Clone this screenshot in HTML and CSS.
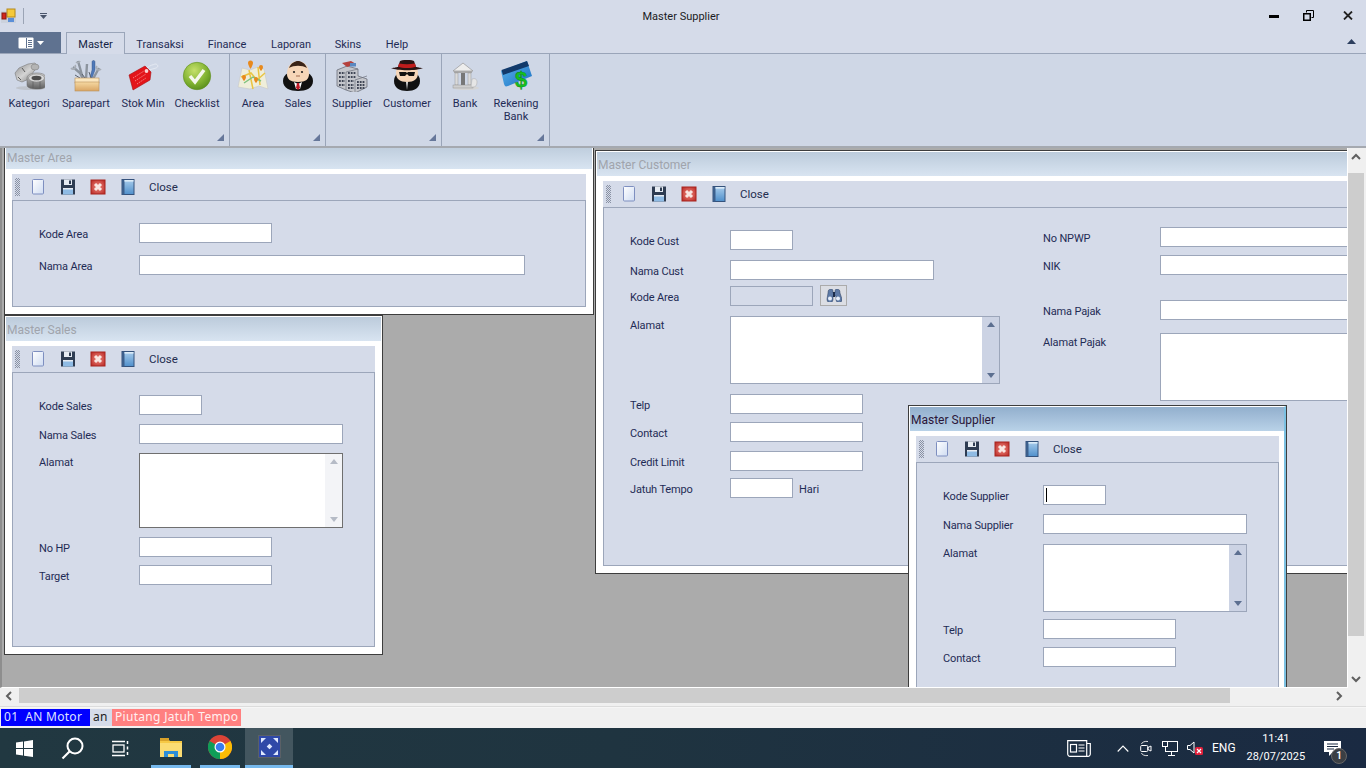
FILE: index.html
```html
<!DOCTYPE html>
<html lang="id">
<head>
<meta charset="utf-8">
<title>Master Supplier</title>
<link rel="stylesheet" href="styles.css">
</head>
<body>
<svg class="defs" width="0" height="0">
  <defs>
    <linearGradient id="gPage" x1="0" y1="0" x2="1" y2="1"><stop offset="0" stop-color="#fff"/><stop offset="1" stop-color="#cfdcf2"/></linearGradient>
    <linearGradient id="gBook" x1="0" y1="0" x2="0" y2="1"><stop offset="0" stop-color="#a9cdec"/><stop offset="1" stop-color="#4f8fcb"/></linearGradient>
    <radialGradient id="gRed" cx=".5" cy=".5" r=".7"><stop offset="0" stop-color="#ee8a80"/><stop offset="1" stop-color="#b82420"/></radialGradient>
    <radialGradient id="gGreen" cx=".4" cy=".3" r=".8"><stop offset="0" stop-color="#c5e06a"/><stop offset=".6" stop-color="#7fb130"/><stop offset="1" stop-color="#4f8518"/></radialGradient>
    <linearGradient id="gSteel" x1="0" y1="0" x2="0" y2="1"><stop offset="0" stop-color="#d6d6d6"/><stop offset=".5" stop-color="#989898"/><stop offset="1" stop-color="#5e5e5e"/></linearGradient>
    <linearGradient id="gBolt" x1="0" y1="0" x2="1" y2="1"><stop offset="0" stop-color="#8d8d8d"/><stop offset=".5" stop-color="#d4d4d4"/><stop offset="1" stop-color="#6a6a6a"/></linearGradient>
    <linearGradient id="gBox" x1="0" y1="0" x2="0" y2="1"><stop offset="0" stop-color="#f6d9a2"/><stop offset="1" stop-color="#d9a564"/></linearGradient>
    <linearGradient id="gCard" x1="0" y1="0" x2="1" y2="1"><stop offset="0" stop-color="#5cb6ee"/><stop offset="1" stop-color="#1c6fc2"/></linearGradient>
    <symbol id="i-new" viewBox="0 0 16 16"><rect x="2.500" y=".5" width="11" height="14.500" rx="1" fill="url(#gPage)" stroke="#7e8fc0"/></symbol>
    <symbol id="i-save" viewBox="0 0 16 16"><path d="M1 .5h14v15H1z" fill="#2e3c52"/><rect x="4" y=".5" width="8" height="5.500" fill="#e6ebf2"/><rect x="9" y="1.500" width="2" height="3.500" fill="#2e3c52"/><rect x="3" y="9" width="10" height="6.500" fill="#8fbbe4"/><rect x="3" y="9" width="10" height="1.500" fill="#e6ebf2"/></symbol>
    <symbol id="i-del" viewBox="0 0 16 16"><rect x="1" y="1" width="14" height="14" fill="url(#gRed)" stroke="#a8241f"/><path d="M5 5l6 6M11 5l-6 6" stroke="#f9e6e2" stroke-width="3"/></symbol>
    <symbol id="i-book" viewBox="0 0 16 16"><rect x="2" y=".5" width="12" height="15" fill="url(#gBook)" stroke="#34527c"/><rect x="2" y="1" width="2.500" height="14.500" fill="#3c5f8c"/><rect x="4.500" y="1" width="9" height="1.600" fill="#dcecf8"/></symbol>
  </defs>
</svg>

<header class="titlebar">
  <div class="qat">
    <svg class="qat-logo" width="15" height="15" viewBox="0 0 15 15"><rect x="0" y="3" width="15" height="12" fill="#ccd2dd"/><rect x="6" y="1" width="8" height="8" fill="#f5c93a" stroke="#b58a1c"/><rect x="1" y="5" width="4" height="6" fill="#d3261c" stroke="#8a1a14"/><rect x="7" y="10" width="6" height="4" fill="#5b8fd8"/></svg>
    <span class="qat-sep"></span>
    <svg class="qat-arrow" width="9" height="6" viewBox="0 0 9 6"><rect x="1" y="0" width="7" height="1" fill="#4a556c"/><path d="M1 2h7L4.500 6z" fill="#4a556c"/></svg>
  </div>
  <div class="app-title">Master Supplier</div>
  <div class="winctl">
    <svg class="wc wc-min" width="10" height="3" viewBox="0 0 10 3"><rect width="10" height="3" fill="#000"/></svg>
    <svg class="wc wc-max" width="11" height="11" viewBox="0 0 11 11"><path d="M3.500 2.500v-2h7v7h-2" fill="none" stroke="#000"/><rect x=".75" y="3.750" width="6.500" height="6.500" fill="none" stroke="#000" stroke-width="1.500"/></svg>
    <svg class="wc wc-x" width="10" height="9" viewBox="0 0 10 9"><path d="M1 .5l8 8M9 .5l-8 8" stroke="#222" stroke-width="1.800"/></svg>
  </div>
</header>

<nav class="tabs">
  <div class="filebtn">
    <svg width="16" height="12" viewBox="0 0 16 12"><rect x=".5" y=".5" width="15" height="11" rx="1" fill="#fff"/><rect x="8" y="1" width="1" height="10" fill="#5f7290"/><path d="M10 3.500h4M10 5.500h4M10 7.500h4M10 9.500h4" stroke="#5f7290"/></svg>
    <svg width="7" height="4" viewBox="0 0 7 4"><path d="M0 0h7L3.500 4z" fill="#fff"/></svg>
  </div>
  <div class="tab tab-on">Master</div>
  <div class="tab t-trans">Transaksi</div>
  <div class="tab t-fin">Finance</div>
  <div class="tab t-lap">Laporan</div>
  <div class="tab t-skin">Skins</div>
  <div class="tab t-help">Help</div>
  <svg class="collapse" width="9" height="5" viewBox="0 0 9 5"><path d="M0 5h9L4.500 0z" fill="#2c3e5e"/></svg>
</nav>

<section class="ribbon">
  <div class="group g1">
    <div class="rb"><svg viewBox="0 0 32 32"><ellipse cx="18" cy="28" rx="15" ry="2" fill="#bfc4cc"/><path d="M2 13l4-5 9-4 7-1 3 4-4 4-5 8-7 3-5-2z" fill="url(#gBolt)" stroke="#6a6a6a" stroke-width=".5"/><path d="M5 17l3 3M9 8l3 4" stroke="#5a5a5a"/><ellipse cx="22" cy="7" rx="4" ry="3" fill="#b4b4b4" stroke="#777" stroke-width=".5"/><path d="M14 18c0-3 4-5 10-5s9 2 9 5v7c0 3-4 4-9 4s-10-1-10-4z" fill="url(#gSteel)" stroke="#666" stroke-width=".5"/><ellipse cx="23.500" cy="18" rx="8" ry="4" fill="#d8d8d8" stroke="#777" stroke-width=".5"/><ellipse cx="23.500" cy="18" rx="5" ry="2.300" fill="#4e4e4e"/><path d="M20 21.500v7M27 21.500v7" stroke="#5a5a5a" stroke-width=".7"/></svg><span>Kategori</span></div>
    <div class="rb"><svg viewBox="0 0 32 32"><path d="M3 7l7 6 3 6M8 1l2 7 3 11M17 4l-1 15M29 8l-6 11" stroke="#8c949e" stroke-width="2.400" fill="none"/><path d="M1 8a2.500 2.500 0 0 0 4-3M6 2a2.500 2.500 0 0 0 4-1M27 6a2.500 2.500 0 0 0 4 3" fill="none" stroke="#a8aeb6" stroke-width="1.600"/><path d="M22 2c0-2 3-2 3 0l0 8-3 8-2-1 2-7z" fill="#4f79b8" stroke="#2f4f80" stroke-width=".4"/><path d="M5 15l5 3M12 14l3 4M19 12l2 6" stroke="#5a616c"/><rect x="5" y="18" width="24" height="5" fill="#fbe7bf" stroke="#b9905a" stroke-width=".6"/><rect x="5" y="22" width="24" height="9" fill="url(#gBox)" stroke="#b9905a" stroke-width=".6"/></svg><span>Sparepart</span></div>
    <div class="rb"><svg viewBox="0 0 32 32"><path d="M20 8c3-3 6-3 8-4 3 0 4 3 1 4-2 1-5 1-7 2" fill="none" stroke="#e8ecf4" stroke-width=".8"/><path d="M2 15L18 6l6 6-1 8L6 30z" fill="#e3151a" stroke="#a60d10" stroke-width=".6"/><path d="M6 18l11-7M8 21l11-7M10 24l9-6" stroke="#f78b8b" stroke-width=".9" stroke-dasharray="1.500 1"/><circle cx="19.500" cy="11" r="1.900" fill="#f9d5d5"/></svg><span>Stok Min</span></div>
    <div class="rb"><svg viewBox="0 0 32 32"><circle cx="16" cy="16" r="13.700" fill="url(#gGreen)" stroke="#5f8f1f" stroke-width=".6"/><path d="M9 16l5 6 9-12" fill="none" stroke="#f4f7ec" stroke-width="3.500"/></svg><span>Checklist</span></div>
    <i class="launch"></i>
  </div>
  <div class="group g2">
    <div class="rb"><svg viewBox="0 0 32 32"><path d="M5 8l8 2 8-3 6 2 4 20-9-3-9 3-12-2z" fill="#efeeda" stroke="#c8c8c8" stroke-width=".6"/><path d="M4 17l10-4 6 7 8-7M12 10l4 19M21 7l2 18" stroke="#e9c442" stroke-width="1.500" fill="none"/><path d="M7 23l9-6 8 4" stroke="#7ec27e" stroke-width="1.500" fill="none"/><g fill="#e8891c"><path d="M11 3a2.500 2.500 0 0 1 5 0c0 2-2.500 6-2.500 6S11 5 11 3z"/><path d="M22 7a2 2 0 0 1 4 0c0 2-2 4-2 4s-2-2-2-4z"/><path d="M5 17a2 2 0 0 1 4 0c0 2-2 4-2 4s-2-2-2-4z"/><path d="M17 19a2 2 0 0 1 4 0c0 2-2 4-2 4s-2-2-2-4z"/></g></svg><span>Area</span></div>
    <div class="rb"><svg viewBox="0 0 32 32"><path d="M1 21C1 28 8 31 16 31s15-3 15-10c0-4-2-6-5-8H6c-3 2-5 4-5 8z" fill="#111"/><path d="M5 14C5 6 10 1 16 1s11 5 11 13c0 5-3 8-11 8S5 19 5 14z" fill="#f6d6b8"/><path d="M7 8c2-5 6-7 9-7s7 2 9 7c-5-3-13-3-18 0z" fill="#3a2418"/><circle cx="12" cy="12" r="1.100" fill="#222"/><circle cx="20" cy="12" r="1.100" fill="#222"/><path d="M14 16h4" stroke="#a06a50"/><path d="M12 22l4 2 4-2-2 7h-4z" fill="#fff"/><path d="M15 23h2l1 5-2 2-2-2z" fill="#c01c28"/></svg><span>Sales</span></div>
    <i class="launch"></i>
  </div>
  <div class="group g3">
    <div class="rb"><svg viewBox="0 0 32 32"><path d="M1 10l10-4 11 3v7l9 3v8l-12 6-9-3-9-4z" fill="#c4c6cc" stroke="#5f636e" stroke-width=".7"/><path d="M6 3l9-2 5 3-9 3z" fill="#b5413c"/><rect x="14" y="3" width="6" height="3.500" fill="#5a88c0"/><path d="M10 30V12l12-3M19 32V20l12-4" fill="none" stroke="#6d717c" stroke-width=".7"/><path d="M3 13h6M3 17h6M3 21h6M3 25h6M12 13h8M12 17h8M12 21h6M21 22h8M21 25h8M21 28h8M12 25h6M12 28h6" stroke="#3f4555" stroke-width="1.800" stroke-dasharray="1.800 1"/></svg><span>Supplier</span></div>
    <div class="rb"><svg viewBox="0 0 32 32"><path d="M3 21c0 7 6 10 13 10s13-3 13-10c0-4-2-6-4-8H7c-2 2-4 4-4 8z" fill="#111"/><path d="M5 13c0-6 4-9 11-9s11 3 11 9c0 6-4 9-11 9S5 19 5 13z" fill="#f6d6b8"/><path d="M0 8c4 0 5-1 7-1l2-6c4-1.500 10-1.500 14 0l2 6c2 0 3 1 7 1-6 3-26 3-32 0z" fill="#2a1414"/><path d="M8 3.500c5 1 11 1 16 0l1 3c-5 2-13 2-18 0z" fill="#c01c1c"/><path d="M8 12h7l1 1 1-1h7l-1 4h-5l-2-2-2 2h-5z" fill="#111"/><path d="M15 22l1 8 1-8z" fill="#ddd"/></svg><span>Customer</span></div>
    <i class="launch"></i>
  </div>
  <div class="group g4">
    <div class="rb"><svg viewBox="0 0 32 32"><ellipse cx="17" cy="28" rx="13" ry="2" fill="#d5d5d5"/><path d="M4 11L14 3l10 8z" fill="#ededed" stroke="#8a8a8a" stroke-width=".6"/><rect x="5" y="11" width="18" height="2" fill="#a9a9a9"/><rect x="6" y="13" width="3" height="12" fill="#dadada" stroke="#888" stroke-width=".4"/><rect x="12" y="13" width="4" height="12" fill="#777"/><rect x="19" y="13" width="3" height="12" fill="#dadada" stroke="#888" stroke-width=".4"/><rect x="4" y="25" width="20" height="3" fill="#cfcfcf" stroke="#888" stroke-width=".4"/><path d="M23 19c3-1 5 0 5 3s-1 5-4 5l-2 0z" fill="#e6e6e6" stroke="#aaa" stroke-width=".5"/></svg><span>Bank</span></div>
    <div class="rb"><svg viewBox="0 0 32 32"><path d="M1 11L27 1l5 15-24 10c-3 1-3 0-4-2z" fill="url(#gCard)"/><path d="M1.500 10L27 1l2 5L3 15z" fill="#123a6b"/><text class="dollar" x="21" y="27">$</text></svg><span>Rekening Bank</span></div>
    <i class="launch"></i>
  </div>
</section>

<main class="workspace">
  <div class="mdi">

    <article class="win w-area">
      <div class="win-in">
        <div class="win-title">Master Area</div>
        <div class="win-body">
          <div class="tbar">
            <i class="grip"></i>
            <span class="tb"><svg width="16" height="16"><use href="#i-new"/></svg></span>
            <span class="tb"><svg width="16" height="16"><use href="#i-save"/></svg></span>
            <span class="tb"><svg width="16" height="16"><use href="#i-del"/></svg></span>
            <span class="tb"><svg width="16" height="16"><use href="#i-book"/></svg></span>
            <span class="tb-close">Close</span>
          </div>
          <div class="panel">
            <div class="row"><label>Kode Area</label><div class="fld w133"></div></div>
            <div class="row mt12"><label>Nama Area</label><div class="fld w386"></div></div>
          </div>
        </div>
      </div>
    </article>

    <article class="win w-sales">
      <div class="win-in">
        <div class="win-title">Master Sales</div>
        <div class="win-body">
          <div class="tbar">
            <i class="grip"></i>
            <span class="tb"><svg width="16" height="16"><use href="#i-new"/></svg></span>
            <span class="tb"><svg width="16" height="16"><use href="#i-save"/></svg></span>
            <span class="tb"><svg width="16" height="16"><use href="#i-del"/></svg></span>
            <span class="tb"><svg width="16" height="16"><use href="#i-book"/></svg></span>
            <span class="tb-close">Close</span>
          </div>
          <div class="panel">
            <div class="row"><label>Kode Sales</label><div class="fld w63"></div></div>
            <div class="row mt9"><label>Nama Sales</label><div class="fld w204"></div></div>
            <div class="row rowta mt9"><label>Alamat</label>
              <div class="ta w204 h75 ta-dim"><div class="ta-sb"><i class="up"></i><i class="dn"></i></div></div></div>
            <div class="row mt9"><label>No HP</label><div class="fld w133"></div></div>
            <div class="row mt8"><label>Target</label><div class="fld w133"></div></div>
          </div>
        </div>
      </div>
    </article>

    <article class="win w-cust">
      <div class="win-in">
        <div class="win-title">Master Customer</div>
        <div class="win-body">
          <div class="tbar">
            <i class="grip"></i>
            <span class="tb"><svg width="16" height="16"><use href="#i-new"/></svg></span>
            <span class="tb"><svg width="16" height="16"><use href="#i-save"/></svg></span>
            <span class="tb"><svg width="16" height="16"><use href="#i-del"/></svg></span>
            <span class="tb"><svg width="16" height="16"><use href="#i-book"/></svg></span>
            <span class="tb-close">Close</span>
          </div>
          <div class="panel panel-cols">
            <div class="col-l">
              <div class="row"><label>Kode Cust</label><div class="fld w63"></div></div>
              <div class="row mt10"><label>Nama Cust</label><div class="fld w204"></div></div>
              <div class="row mt6"><label>Kode Area</label><div class="fld w83 fld-off"></div>
                <div class="findbtn"><svg width="16" height="13" viewBox="0 0 16 13"><path d="M2 4c0-3 1-4 3-4s2 1 2 4h2c0-3 0-4 2-4s3 1 3 4l2 6a3 3 0 0 1-6 1V7H7v4a3 3 0 0 1-6-1z" fill="#5e7aa6" stroke="#2c3e5e" stroke-width=".5"/><circle cx="4" cy="9.500" r="2" fill="#e8f0fc"/><circle cx="12" cy="9.500" r="2" fill="#e8f0fc"/><rect x="7" y="3" width="2" height="5" fill="#1c2c4a"/></svg></div></div>
              <div class="row rowta mt10"><label>Alamat</label>
                <div class="ta w270 h68"><div class="ta-sb"><i class="up"></i><i class="dn"></i></div></div></div>
              <div class="row mt10"><label>Telp</label><div class="fld w133"></div></div>
              <div class="row mt8"><label>Contact</label><div class="fld w133"></div></div>
              <div class="row mt9"><label>Credit Limit</label><div class="fld w133"></div></div>
              <div class="row mt7"><label>Jatuh Tempo</label><div class="fld w63"></div><span class="unit">Hari</span></div>
            </div>
            <div class="col-r">
              <div class="row rr"><label>No NPWP</label><div class="fld w300"></div></div>
              <div class="row rr mt8"><label>NIK</label><div class="fld w300"></div></div>
              <div class="row rr mt25"><label>Nama Pajak</label><div class="fld w300"></div></div>
              <div class="row rowta rr mt13"><label>Alamat Pajak</label><div class="ta w300 h68"></div></div>
            </div>
          </div>
        </div>
      </div>
    </article>

    <article class="win w-supp">
      <div class="win-in">
        <div class="win-title">Master Supplier</div>
        <div class="win-body">
          <div class="tbar">
            <i class="grip"></i>
            <span class="tb"><svg width="16" height="16"><use href="#i-new"/></svg></span>
            <span class="tb"><svg width="16" height="16"><use href="#i-save"/></svg></span>
            <span class="tb"><svg width="16" height="16"><use href="#i-del"/></svg></span>
            <span class="tb"><svg width="16" height="16"><use href="#i-book"/></svg></span>
            <span class="tb-close">Close</span>
          </div>
          <div class="panel">
            <div class="row"><label>Kode Supplier</label><div class="fld w63"><i class="caret"></i></div></div>
            <div class="row mt9"><label>Nama Supplier</label><div class="fld w204"></div></div>
            <div class="row rowta mt10"><label>Alamat</label>
              <div class="ta w204 h68"><div class="ta-sb"><i class="up"></i><i class="dn"></i></div></div></div>
            <div class="row mt7"><label>Telp</label><div class="fld w133"></div></div>
            <div class="row mt8"><label>Contact</label><div class="fld w133"></div></div>
          </div>
        </div>
      </div>
    </article>

  </div>
  <div class="vsb">
    <svg class="sb-ic" width="10" height="7" viewBox="0 0 10 7"><path d="M1 6l4-4 4 4" fill="none" stroke="#606060" stroke-width="2"/></svg>
    <div class="vsb-track"><div class="vsb-thumb"></div></div>
    <svg class="sb-ic" width="10" height="7" viewBox="0 0 10 7"><path d="M1 1l4 4 4-4" fill="none" stroke="#606060" stroke-width="2"/></svg>
  </div>
  <div class="hsb">
    <svg class="sb-ic" width="7" height="10" viewBox="0 0 7 10"><path d="M6 1L2 5l4 4" fill="none" stroke="#606060" stroke-width="2"/></svg>
    <div class="hsb-track"><div class="hsb-thumb"></div></div>
    <svg class="sb-ic" width="7" height="10" viewBox="0 0 7 10"><path d="M1 1l4 4-4 4" fill="none" stroke="#606060" stroke-width="2"/></svg>
  </div>
</main>

<div class="status">
  <span class="st st-blue">01  AN Motor</span>
  <span class="st st-plain">an</span>
  <span class="st st-pink">Piutang Jatuh Tempo</span>
</div>

<footer class="taskbar">
  <div class="tk tk-start"><svg width="17" height="17" viewBox="0 0 17 17"><path d="M0 2.500L7 1.500V8H0zM8 1.400L17 0v8H8zM0 9h7v6.500l-7-1zM8 9h9v8l-9-1.300z" fill="#fff"/></svg></div>
  <div class="tk tk-search"><svg width="23" height="23" viewBox="0 0 23 23"><circle cx="14" cy="9" r="7.500" fill="none" stroke="#fff" stroke-width="2"/><path d="M8.500 14.500L1.500 21.500" stroke="#fff" stroke-width="2.200"/></svg></div>
  <div class="tk tk-view"><svg width="17" height="17" viewBox="0 0 17 17"><rect x="1" y="5" width="11" height="7" fill="none" stroke="#fff" stroke-width="1.300"/><path d="M0 1.500h13M0 15.500h13" stroke="#fff" stroke-width="1.300"/><path d="M15.500 1v3M15.500 6.500v3M15.500 12v3" stroke="#fff" stroke-width="1.500"/></svg></div>
  <div class="tk tk-app tk-run"><svg width="22" height="20" viewBox="0 0 22 20"><path d="M0 2h8l2 2h12v16H0z" fill="#f6c945"/><rect x="0" y="1" width="9" height="3" fill="#d9a22a"/><path d="M0 6h22v14H0z" fill="#fbdc73"/><path d="M4 20v-6h14v6h-4v-3H8v3z" fill="#2f8fd8"/></svg></div>
  <div class="tk tk-app tk-run"><svg width="24" height="24" viewBox="0 0 24 24"><circle cx="12" cy="12" r="12" fill="#db4437"/><path d="M12 12L22.400 6A12 12 0 0 1 12 24z" fill="#fbbc05"/><path d="M12 12L12 24A12 12 0 0 1 1.600 6z" fill="#0f9d58"/><circle cx="12" cy="12" r="5.500" fill="#fff"/><circle cx="12" cy="12" r="4.300" fill="#3b7ded"/></svg></div>
  <div class="tk tk-app tk-run tk-on"><svg width="23" height="23" viewBox="0 0 23 23"><rect width="23" height="23" fill="#5a6066"/><rect x="1" y="1" width="21" height="21" fill="#2f49a8"/><g fill="#dfe8ff"><path d="M3 3h5L3 8zM20 3v5l-5-5zM3 20v-5l5 5zM20 20h-5l5-5z"/><rect x="9.500" y="9.500" width="4" height="4" transform="rotate(45 11.500 11.500)"/></g></svg></div>
  <div class="tray">
    <svg class="tr-news" width="24" height="17" viewBox="0 0 24 17"><path d="M.7.700h19v15.600H3a2.300 2.300 0 0 1-2.300-2.300zM19.700 3.500h3.600v10.500a2.300 2.300 0 0 1-2.300 2.300h-1.300" fill="none" stroke="#fff" stroke-width="1.200"/><rect x="3.500" y="4.500" width="6" height="7.500" fill="none" stroke="#fff" stroke-width="1.200"/><path d="M11.500 5h6M11.500 8h6M11.500 11h6" stroke="#fff" stroke-width="1.200"/></svg>
    <svg class="tr-up" width="12" height="7" viewBox="0 0 12 7"><path d="M.7 6.500L6 1l5.300 5.500" fill="none" stroke="#fff" stroke-width="1.100"/></svg>
    <svg class="tr-cam" width="12" height="17" viewBox="0 0 12 17"><path d="M1.500 4A5 3 0 0 1 8 1.500M1.500 13A5 3 0 0 0 8 15.500" fill="none" stroke="#ddd"/><rect x=".7" y="5.500" width="7" height="6" rx="1" fill="none" stroke="#fff"/><path d="M8 7.500l3-1.500v5l-3-1.500z" fill="none" stroke="#fff"/></svg>
    <svg class="tr-net" width="16" height="15" viewBox="0 0 16 15"><rect x="3.500" y=".5" width="12" height="10" fill="none" stroke="#fff"/><rect x=".5" y=".5" width="5" height="5" fill="#1a2a42" stroke="#fff"/><path d="M9.500 11v3M6 14.500h7" stroke="#fff"/></svg>
    <span class="tr-sound"><svg width="16" height="14" viewBox="0 0 16 14"><path d="M.5 4.500h2.500L7 1v11L3 8.500H.5z" fill="none" stroke="#fff"/><rect x="8" y="6" width="8" height="8" rx="1.500" fill="#e01f3a"/><path d="M10 8l4 4M14 8l-4 4" stroke="#fff" stroke-width="1.200"/></svg></span>
    <span class="tr-lang">ENG</span>
    <span class="tr-clock"><span>11:41</span><span>28/07/2025</span></span>
    <span class="tr-note"><svg width="17" height="15" viewBox="0 0 17 15"><path d="M0 0h17v11H9l-4 4v-4H0z" fill="#fff"/><path d="M3 3h11M3 5.500h11M3 8h7" stroke="#1a2a42"/></svg><b class="badge">1</b></span>
  </div>
</footer>
</body>
</html>
```

FILE: styles.css
```css
* { box-sizing: border-box; }
html, body { margin: 0; padding: 0; }
body {
  width: 1366px; height: 768px; overflow: hidden;
  display: flex; flex-direction: column;
  background: #d5dbe9;
  font-family: Roboto, "Open Sans", sans-serif;
  font-size: 11px; color: #1f2b55;
}
.defs { position: absolute; }
i { display: block; font-style: normal; }

/* title bar */
.titlebar { height: 32px; flex: none; display: flex; position: relative; align-items: center; }
.qat { display: flex; align-items: center; width: 200px; padding-left: 1px; }
.qat-logo { margin-top: -1px; }
.qat-sep { width: 1px; height: 16px; background: #9ba4b5; margin-left: 7px; }
.qat-arrow { margin-left: 15px; }
.app-title { position: absolute; left: 0; right: 4px; top: 9px; text-align: center; color: #1c1c24; line-height: 15px; }
.winctl { margin-left: auto; display: flex; align-items: center; padding-right: 13px; margin-top: -2px; }
.wc-min { margin-right: 24px; margin-top: 2px; }
.wc-max { margin-right: 29px; }

/* tabs */
.tabs { height: 22px; flex: none; display: flex; position: relative; border-bottom: 1px solid #9aa5b9; }
.filebtn { width: 61px; height: 21px; background: #5f7290; display: flex; align-items: center; justify-content: center; gap: 3px; }
.tab { height: 21px; line-height: 25px; text-align: center; color: #1f2b55; }
.tab-on { width: 59px; margin-left: 5px; height: 22px; background: #d5dbe9; border: 1px solid #9aa5b9; border-bottom: 0; line-height: 23px; color: #141f45; }
.t-trans { width: 70px; }
.t-fin { width: 64px; }
.t-lap { width: 64px; }
.t-skin { width: 50px; }
.t-help { width: 48px; }
.collapse { position: absolute; right: 10px; top: 7px; }

/* ribbon */
.ribbon { height: 94px; flex: none; display: flex; background: #cfd7e6; border-bottom: 2px solid #a5a9b0; }
.group { position: relative; display: grid; height: 92px; border-right: 1px solid #9aa5b9; }
.g1 { width: 230px; grid-template-columns: 58px 56px 58px 50px; }
.g2 { width: 96px; grid-template-columns: 46px 44px; }
.g3 { width: 116px; grid-template-columns: 52px 58px; }
.g4 { width: 108px; grid-template-columns: 46px 56px; }
.rb { display: flex; flex-direction: column; align-items: center; text-align: center; line-height: 13px; color: #1f2b55; }
.rb svg { width: 32px; height: 32px; margin-top: 6px; margin-bottom: 5px; flex: none; }
.rb span { display: block; padding: 0 4px; }
.launch { position: absolute; right: 5px; bottom: 5px; width: 0; height: 0; border-left: 7px solid transparent; border-bottom: 7px solid #66779a; }
.dollar { font-family: "Liberation Sans", sans-serif; font-weight: 700; font-size: 22px; fill: #14c21e; stroke: #0a7a12; stroke-width: .4; text-anchor: middle; }

/* workspace */
.workspace {
  height: 559px; flex: none; display: grid;
  grid-template-columns: 1348px 18px; grid-template-rows: 540px 16px;
  background: #f0f0f0; border-bottom: 1px solid #dcdcdc;
}
.mdi { position: relative; overflow: hidden; background: #ababab; border-left: 2px solid #8e8e8e; border-right: 1px solid #fff; border-bottom: 1px solid #fff; }
.vsb { display: flex; flex-direction: column; align-items: center; background: #f0f0f0; width: 16px; }
.vsb .sb-ic { margin: 5px 0; flex: none; }
.vsb-track { flex: 1; width: 16px; padding-top: 6px; margin-top: 2px; }
.vsb-thumb { height: 463px; background: #cdcdcd; }
.hsb { display: flex; align-items: center; background: #f0f0f0; grid-column: 1 / 3; height: 16px; padding: 0 23px 0 5px; }
.hsb-track { flex: 1; height: 16px; padding-left: 7px; }
.hsb-thumb { height: 15px; width: 1211px; background: #cdcdcd; }

/* MDI windows */
.win { position: absolute; background: #fff; border: 1px solid #3d3d3d; }
.win-in { height: 100%; border: 1px solid #fff; background: #fff; display: flex; flex-direction: column; }
.w-area { left: 2px; top: -5px; width: 590px; height: 172px; }
.w-sales { left: 2px; top: 167px; width: 379px; height: 340px; }
.w-cust { left: 593px; top: 2px; width: 800px; height: 424px; }
.w-supp { left: 906px; top: 257px; width: 379px; height: 340px; z-index: 2; }
.w-supp .win-in { border-right: 2px solid #7cc1e2; }
.win-title { height: 24px; flex: none; padding-left: 1px; line-height: 26px; font-size: 12px; color: #a0a4ac; background: linear-gradient(#bccbdb, #d8e4f1); }
.w-supp .win-title { background: linear-gradient(#92afcd, #b9d2e8); color: #2a1638; }
.win-body { flex: 1; display: flex; flex-direction: column; padding: 5px 6px 6px 6px; background: #fff; min-height: 0; }
.w-supp .win-body { padding-right: 5px; }
.tbar { height: 26px; flex: none; display: flex; align-items: center; background: #d5dbe9; }
.grip { width: 5px; height: 18px; margin-left: 3px; margin-right: 3px; background: repeating-conic-gradient(#8a92a4 0 25%, transparent 0 50%) 0 0 / 2px 2px; }
.tb { width: 30px; height: 16px; display: flex; justify-content: center; }
.tb-close { margin-left: 6px; color: #232d50; font-size: 11.500px; }
.panel { flex: 1; min-height: 0; background: #d5dbe9; border: 1px solid #9ca6ba; padding: 22px 0 0 26px; }
.panel-cols { display: flex; padding-top: 0; }
.row { display: flex; align-items: center; height: 20px; }
.row label { width: 100px; flex: none; color: #1f2b55; padding-top: 2px; letter-spacing: -.15px; }
.rowta { height: auto; align-items: flex-start; }
.rowta label { padding-top: 3px; }
.mt6 { margin-top: 6px; } .mt7 { margin-top: 7px; } .mt8 { margin-top: 8px; }
.mt9 { margin-top: 9px; } .mt10 { margin-top: 10px; } .mt12 { margin-top: 12px; }
.mt13 { margin-top: 13px; } .mt25 { margin-top: 25px; }
.fld { height: 20px; background: #fff; border: 1px solid #9ca6ba; position: relative; flex: none; }
.fld-off { background: #d5dbe9; }
.w63 { width: 63px; } .w83 { width: 83px; } .w133 { width: 133px; } .w204 { width: 204px; }
.w270 { width: 270px; } .w300 { width: 300px; } .w386 { width: 386px; }
.h68 { height: 68px; } .h75 { height: 75px; }
.ta { background: #fff; border: 1px solid #9ca6ba; display: flex; justify-content: flex-end; flex: none; }
.ta-sb { width: 17px; background: #ccd3e4; display: flex; flex-direction: column; justify-content: space-between; align-items: center; padding: 5px 0; }
.ta-dim { border-color: #6f6f6f; }
.ta-dim .ta-sb { background: #f3f4f7; }
.up, .dn { width: 0; height: 0; border-left: 4px solid transparent; border-right: 4px solid transparent; }
.up { border-bottom: 5px solid #5c6f90; }
.dn { border-top: 5px solid #5c6f90; }
.ta-dim .up { border-bottom-color: #b5bbc6; }
.ta-dim .dn { border-top-color: #b5bbc6; }
.caret { position: absolute; left: 2px; top: 2px; width: 1px; height: 14px; background: #000; }
.col-l { width: 413px; padding-top: 22px; flex: none; }
.col-r { padding-top: 19px; flex: none; }
.rr label { width: 117px; }
.unit { margin-left: 6px; padding-top: 2px; }
.findbtn { width: 27px; height: 21px; margin-left: 7px; background: #dcdee4; border: 1px solid #ababab; display: flex; align-items: center; justify-content: center; margin-top: -2px; }

/* status */
.status { height: 21px; flex: none; display: flex; align-items: flex-end; background: #f0f0f0; padding: 0 0 2px 1px; border-top: 1px solid #f6f6f6; }
.st { height: 17px; line-height: 16px; font-family: "Noto Sans", sans-serif; font-size: 12px; white-space: pre; letter-spacing: .3px; overflow: hidden; }
.st-blue { width: 89px; background: #0000ff; color: #dfe3ff; padding-left: 3px; }
.st-plain { width: 22px; background: #d5dbe9; color: #222; padding-left: 3px; }
.st-pink { width: 129px; background: #ff8080; color: #fff0f0; padding-left: 3px; }

/* taskbar */
.taskbar { height: 40px; flex: none; display: flex; align-items: center; background: linear-gradient(90deg, #213841, #1f3440 45%, #1a2a42); color: #fff; font-size: 12px; }
.tk { height: 40px; display: flex; align-items: center; justify-content: center; flex: none; }
.tk-start { width: 48px; }
.tk-search { width: 48px; }
.tk-view { width: 48px; margin-right: 7px; }
.tk-app { width: 40px; margin-right: 9px; border-bottom: 3px solid transparent; }
.tk-run { border-bottom-color: #76b9ed; }
.tk-on { width: 48px; margin-left: -4px; background: #43565f; }
.tray { margin-left: auto; display: flex; align-items: center; height: 40px; position: relative; width: 300px; }
.tr-news { margin-left: 1px; }
.tr-up { margin-left: 26px; }
.tr-cam { margin-left: 11px; }
.tr-net { margin-left: 10px; }
.tr-sound { margin-left: 9px; display: flex; }
.tr-lang { margin-left: 9px; }
.tr-clock { margin-left: 11px; display: flex; flex-direction: column; align-items: center; line-height: 18px; font-size: 11px; }
.tr-note { margin-left: 19px; position: relative; display: flex; }
.badge { position: absolute; left: 7px; top: 7px; width: 16px; height: 16px; border-radius: 50%; background: #3b3f44; border: 1px solid #666; color: #fff; font-size: 10px; font-weight: 600; text-align: center; line-height: 14px; }
```
